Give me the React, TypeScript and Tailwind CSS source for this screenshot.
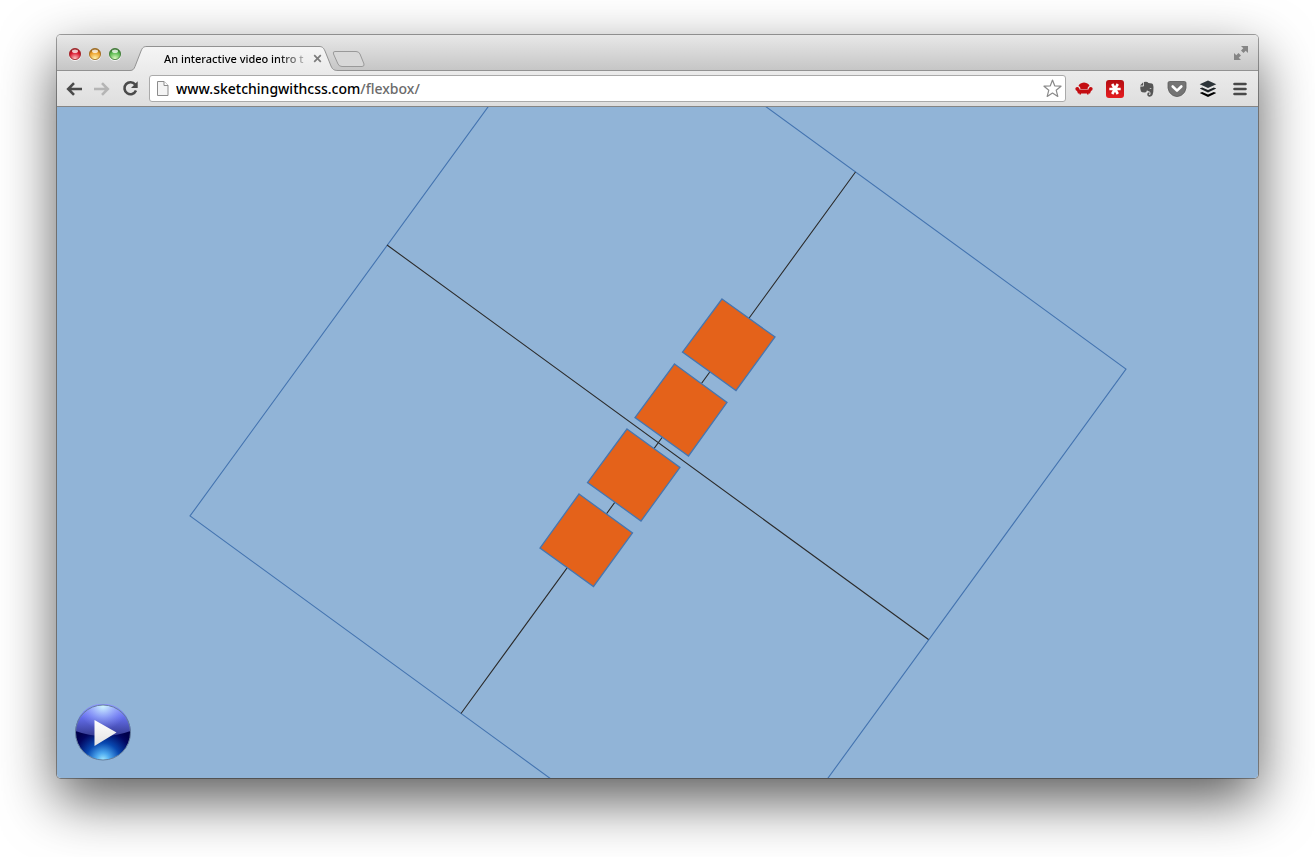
import React from "react";

const lights = [
  { label: "Close window", id: "lightRed", rim: "#9a1a20", dark: "#d8142c", pale: "#ffc4c4" },
  { label: "Minimize window", id: "lightAmber", rim: "#9a6418", dark: "#eda02a", pale: "#fff4b0" },
  { label: "Zoom window", id: "lightGreen", rim: "#387430", dark: "#58b84e", pale: "#dcfac0" },
];

const boxes = [
  "722,299 775,337 736,390.5 682.5,352",
  "674.5,364 727,402.5 688.5,456 635,417.5",
  "627,429 680,467.5 641,521 587.5,482.5",
  "579,494 632.5,533 593.5,586.5 540,548",
];

function Light({ light }: { light: (typeof lights)[number] }) {
  return (
    <button type="button" aria-label={light.label} className="size-[14px]">
      <svg viewBox="0 0 14 14" className="block size-[14px]">
        <defs>
          <radialGradient id={light.id} cx="0.5" cy="0.9" r="0.8">
            <stop offset="0" stopColor={light.pale} />
            <stop offset="0.7" stopColor={light.dark} />
            <stop offset="1" stopColor={light.rim} />
          </radialGradient>
        </defs>
        <circle cx="7" cy="7.8" r="6.2" fill="#f4f4f4" />
        <circle cx="7" cy="7" r="5.6" fill={`url(#${light.id})`} stroke={light.rim} strokeWidth="0.8" />
        <ellipse cx="7" cy="4.2" rx="3" ry="1.8" fill="#fff" opacity="0.75" />
      </svg>
    </button>
  );
}

function TabStrip() {
  return (
    <div className="flex h-[36px] items-end border-b border-[#929292] bg-linear-to-b from-[#e8e8e8] to-[#c6c6c6]">
      <div className="flex gap-[6px] self-center pt-[3px] pl-[11px]">
        {lights.map((light) => (
          <Light key={light.id} light={light} />
        ))}
      </div>
      <div className="relative -mb-px ml-[8px] h-[25px] w-[208px]">
        <svg viewBox="0 0 208 25" className="absolute inset-0 h-[25px] w-[208px]" aria-hidden="true">
          <defs>
            <linearGradient id="tabFill" x1="0" y1="0" x2="0" y2="1">
              <stop offset="0" stopColor="#f5f5f5" />
              <stop offset="1" stopColor="#ebebeb" />
            </linearGradient>
          </defs>
          <path
            d="M0 24.5 C3 24.5 4 23 5 20.5 L11 5 C12.5 1.5 13.5 0.5 17 0.5 H189 C192 0.5 193.5 1.5 195 5 L201 20 C202.5 23.5 204 24.5 208 24.5 V25 H0 Z"
            fill="url(#tabFill)"
          />
          <path
            d="M0 24.5 C3 24.5 4 23 5 20.5 L11 5 C12.5 1.5 13.5 0.5 17 0.5 H189 C192 0.5 193.5 1.5 195 5 L201 20 C202.5 23.5 204 24.5 208 24.5"
            fill="none"
            stroke="#929292"
          />
        </svg>
        <div className="relative flex h-full items-center pl-[34px]">
          <span className="w-[142px] bg-linear-to-r from-black from-80% to-black/20 bg-clip-text text-[11px] leading-[16px] font-medium whitespace-nowrap text-transparent">
            An interactive video intro t
          </span>
          <button type="button" aria-label="Close tab" className="ml-[7px] size-[9px]">
            <svg viewBox="0 0 9 9" className="block size-[9px]">
              <path d="M1.2 1.2 L7.8 7.8 M7.8 1.2 L1.2 7.8" stroke="#7b7b7b" strokeWidth="1.7" />
            </svg>
          </button>
        </div>
      </div>
      <button type="button" aria-label="New tab" className="-ml-[7px] mb-[2px] h-[18px] w-[34px]">
        <svg viewBox="0 0 34 18" className="block h-[18px] w-[34px]">
          <path
            d="M4 1.5 H25 Q28 1.5 29 4 L33 14 Q33.5 16.5 31 16.5 H11 Q8 16.5 7 14 L2.5 4 Q1.5 1.5 4 1.5 Z"
            fill="#d8d8d8"
            stroke="#999"
          />
        </svg>
      </button>
      <button type="button" aria-label="Enter full screen" className="mr-[9px] ml-auto size-[16px] self-center">
        <svg viewBox="0 0 16 16" className="block size-[16px]" fill="#858585">
          <path d="M8 1 H15 V8 L12.7 5.7 L10.5 8 L8 5.5 L10.3 3.3 Z" />
          <path d="M8 15 H1 V8 L3.3 10.3 L5.5 8 L8 10.5 L5.7 12.7 Z" />
        </svg>
      </button>
    </div>
  );
}

function Toolbar() {
  return (
    <div className="flex h-[36px] items-center border-b border-[#858585] bg-linear-to-b from-[#ebebeb] to-[#dedede] pr-[8px] pl-[9px]">
      <button type="button" aria-label="Back" className="mr-[12px] h-[16px] w-[16px]">
        <svg viewBox="0 0 16 16" className="block size-[16px]" fill="none" stroke="#4a4a4a" strokeWidth="2.6">
          <path d="M8 2.2 L2.2 8 L8 13.8 M2 8 H16" />
        </svg>
      </button>
      <button type="button" aria-label="Forward" className="mr-[12px] h-[16px] w-[16px]">
        <svg viewBox="0 0 16 16" className="block size-[16px]" fill="none" stroke="#b5b5b5" strokeWidth="2.6">
          <path d="M8 2.2 L13.8 8 L8 13.8 M14 8 H0" />
        </svg>
      </button>
      <button type="button" aria-label="Reload" className="mr-[10px] size-[17px]">
        <svg viewBox="0 0 17 17" className="block size-[17px]">
          <path d="M13.2 4.5 A6 6 0 1 0 14 10.6" fill="none" stroke="#4a4a4a" strokeWidth="2.6" />
          <path d="M15.7 1.3 V8 H9 Z" fill="#4a4a4a" />
        </svg>
      </button>
      <form
        className="relative flex h-[27px] min-w-0 flex-1 items-center rounded-[3px] border border-[#aaa] bg-white pr-[3px] pl-[6px]"
        onSubmit={(event) => event.preventDefault()}
      >
        <svg viewBox="0 0 13 15" className="mr-[7px] h-[15px] w-[13px] shrink-0" aria-hidden="true">
          <path d="M1.5 0.5 H8 L12 4.5 V14.5 H1.5 Z" fill="#f4f4f4" stroke="#8c8c8c" />
          <path d="M8 0.5 V4.5 H12" fill="#fff" stroke="#8c8c8c" />
        </svg>
        <div
          role="textbox"
          aria-label="Address"
          contentEditable
          suppressContentEditableWarning
          className="min-w-0 flex-1 overflow-hidden text-[14px] leading-[20px] font-medium whitespace-nowrap text-black outline-none"
        >
          www.sketchingwithcss.com<span className="text-[#6b6b6b]">/flexbox/</span>
        </div>
        <button type="button" aria-label="Bookmark this page" className="size-[19px]">
          <svg viewBox="0 0 19 19" className="block size-[19px]">
            <path
              d="M9.5 1 L11.7 6.8 L18 7.2 L13.2 11.2 L14.8 17.4 L9.5 14 L4.2 17.4 L5.8 11.2 L1 7.2 L7.3 6.8 Z"
              fill="#fff"
              stroke="#8a8a8a"
              strokeWidth="1.2"
              strokeLinejoin="round"
            />
          </svg>
        </button>
      </form>
      <div className="ml-[8px] flex items-center gap-[11px]">
        <button type="button" aria-label="Couch extension" className="size-[20px]">
          <svg viewBox="0 0 20 20" className="block size-[20px]" fill="#c40d12">
            <path d="M4.5 7 Q5 4 10 3.5 Q15 4 15.5 7 Q13.5 7.5 13.5 10 H6.5 Q6.5 7.5 4.5 7 Z" />
            <path d="M1.3 9.8 Q1.5 7.8 3.5 8 Q5.5 8.3 5.5 10.5 H14.5 Q14.5 8.3 16.5 8 Q18.5 7.8 18.7 9.8 Q18.5 11.5 17 12 L16 14.5 H14.5 V15.5 H13 V14.5 H7 V15.5 H5.5 V14.5 H4 L3 12 Q1.5 11.5 1.3 9.8 Z" />
          </svg>
        </button>
        <button type="button" aria-label="Password manager" className="size-[20px]">
          <svg viewBox="0 0 20 20" className="block size-[20px]">
            <defs>
              <linearGradient id="passFill" x1="0" y1="0" x2="0" y2="1">
                <stop offset="0" stopColor="#b40d12" />
                <stop offset="1" stopColor="#e51c20" />
              </linearGradient>
            </defs>
            <rect x="1" y="1" width="18" height="18" rx="3" fill="url(#passFill)" />
            <path d="M4.3 10 H15.7 M7.2 5 L12.8 15 M12.8 5 L7.2 15" stroke="#fff" strokeWidth="2.6" />
          </svg>
        </button>
        <button type="button" aria-label="Web clipper" className="size-[20px]">
          <svg viewBox="0 0 20 20" className="block size-[20px]">
            <path
              d="M8 3 Q11 2 12.5 4 L16 4.6 Q17.3 5 17.5 8 Q17.6 13 16.5 16 Q15.5 18 13 17.8 Q11 17.3 11.2 15 Q11.5 13.2 13.5 13.3 V14.7 Q12.7 14.8 12.8 15.6 Q13.7 16.5 14.5 15.2 Q15 13.5 13.5 12.5 Q11.5 12 11 11.3 Q10.5 13.5 9 13.5 Q5.5 13.5 5 12.5 Q4 10 4.3 7.5 H7 Q8 7.3 8 6.5 Z"
              fill="#555"
            />
            <path d="M4 6.5 L7.2 3.3 V6.5 Z" fill="#555" />
            <path d="M13.5 9.7 Q14.3 8 15.7 9.9 Z" fill="#ddd" />
          </svg>
        </button>
        <button type="button" aria-label="Save to reading list" className="size-[20px]">
          <svg viewBox="0 0 20 20" className="block size-[20px]">
            <path
              d="M2.5 2.5 H17.5 Q19 2.5 19 4 V9 Q18.5 14 14 16.5 Q10 18.7 6 16.5 Q1.5 14 1 9 V4 Q1 2.5 2.5 2.5 Z"
              fill="#747474"
              stroke="#5b5b5b"
              strokeWidth="0.8"
            />
            <path d="M5.7 7.5 L10 11.6 L14.3 7.5" fill="none" stroke="#fff" strokeWidth="2.6" strokeLinecap="round" strokeLinejoin="round" />
          </svg>
        </button>
        <button type="button" aria-label="Share queue" className="size-[20px]">
          <svg viewBox="0 0 20 20" className="block size-[20px]">
            <path d="M10 1.5 L18.3 5.3 L10 9.1 L1.7 5.3 Z" fill="#2d3439" />
            <path d="M1.7 9.5 L4.2 8.4 L10 11 L15.8 8.4 L18.3 9.5 L10 13.4 Z" fill="#1e2327" />
            <path d="M1.7 14 L4.2 12.9 L10 15.5 L15.8 12.9 L18.3 14 L10 18 Z" fill="#000" />
          </svg>
        </button>
        <button type="button" aria-label="Menu" className="ml-px size-[20px]">
          <svg viewBox="0 0 20 20" className="block size-[20px]" stroke="#494949" strokeWidth="2.6" strokeLinecap="round">
            <path d="M4.5 5 H15.5 M4.5 10 H15.5 M4.5 15 H15.5" />
          </svg>
        </button>
      </div>
    </div>
  );
}

function PlayButton() {
  return (
    <button type="button" aria-label="Play video" className="absolute bottom-[16px] left-[17px] size-[58px]">
      <svg viewBox="0 0 58 58" className="block size-[58px]">
        <defs>
          <radialGradient id="orb" cx="0.5" cy="1" r="0.62">
            <stop offset="0" stopColor="#a0e8ff" />
            <stop offset="0.2" stopColor="#4eaaf0" />
            <stop offset="0.5" stopColor="#0848b0" />
            <stop offset="0.85" stopColor="#020660" />
            <stop offset="1" stopColor="#00004c" />
          </radialGradient>
          <linearGradient id="gloss" x1="0" y1="0" x2="0" y2="1">
            <stop offset="0" stopColor="#9299ff" />
            <stop offset="0.4" stopColor="#6670ee" />
            <stop offset="1" stopColor="#343a90" />
          </linearGradient>
          <radialGradient id="glow" cx="0.5" cy="0" r="0.45">
            <stop offset="0" stopColor="#d4ffff" />
            <stop offset="1" stopColor="#9299ff" stopOpacity="0" />
          </radialGradient>
          <linearGradient id="arrow" x1="0" y1="0" x2="0" y2="1">
            <stop offset="0" stopColor="#fff" />
            <stop offset="1" stopColor="#e2e2e2" />
          </linearGradient>
        </defs>
        <circle cx="29" cy="28.5" r="27.5" fill="url(#orb)" />
        <path d="M1.5 27 A27.5 27.5 0 0 1 56.5 27 Q43 32 29 32 Q15 32 1.5 27 Z" fill="url(#gloss)" />
        <circle cx="29" cy="28.5" r="27.5" fill="url(#glow)" />
        <circle cx="29" cy="28.5" r="27.5" fill="none" stroke="#66809e" strokeWidth="1" />
        <path d="M20.5 16 L42.5 28.5 L20.5 42 Z" fill="url(#arrow)" />
      </svg>
    </button>
  );
}

export default function App() {
  return (
    <div className="flex min-h-screen flex-col bg-white px-[57px] pt-[35px] pb-[79px] font-['Noto_Sans',sans-serif]">
      <div className="flex flex-1 flex-col rounded-[4px] shadow-[0_0_0_1px_rgba(0,0,0,0.35),0_22px_56px_rgba(0,0,0,0.65)]">
        <div className="flex flex-1 flex-col overflow-hidden rounded-[4px]">
          <TabStrip />
          <Toolbar />
          <main className="relative flex min-h-[400px] flex-1 bg-[#91b4d7]">
            <svg
              viewBox="57 107 1201 671"
              preserveAspectRatio="xMidYMid slice"
              className="h-full w-full flex-1"
              role="img"
              aria-label="Rotated flex container with four items along its main axis"
            >
              <polygon points="584.5,-25.5 1126,369 731.5,910.5 190,516" fill="none" stroke="#4474b0" strokeWidth="1.1" />
              <path d="M387 245 L928.5 639.5 M855.5 172 L461 713.5" stroke="#2b2b2b" strokeWidth="1.1" />
              {boxes.map((points) => (
                <polygon key={points} points={points} fill="#e4621a" stroke="#4676b0" strokeWidth="1.3" />
              ))}
            </svg>
            <PlayButton />
          </main>
        </div>
      </div>
    </div>
  );
}
